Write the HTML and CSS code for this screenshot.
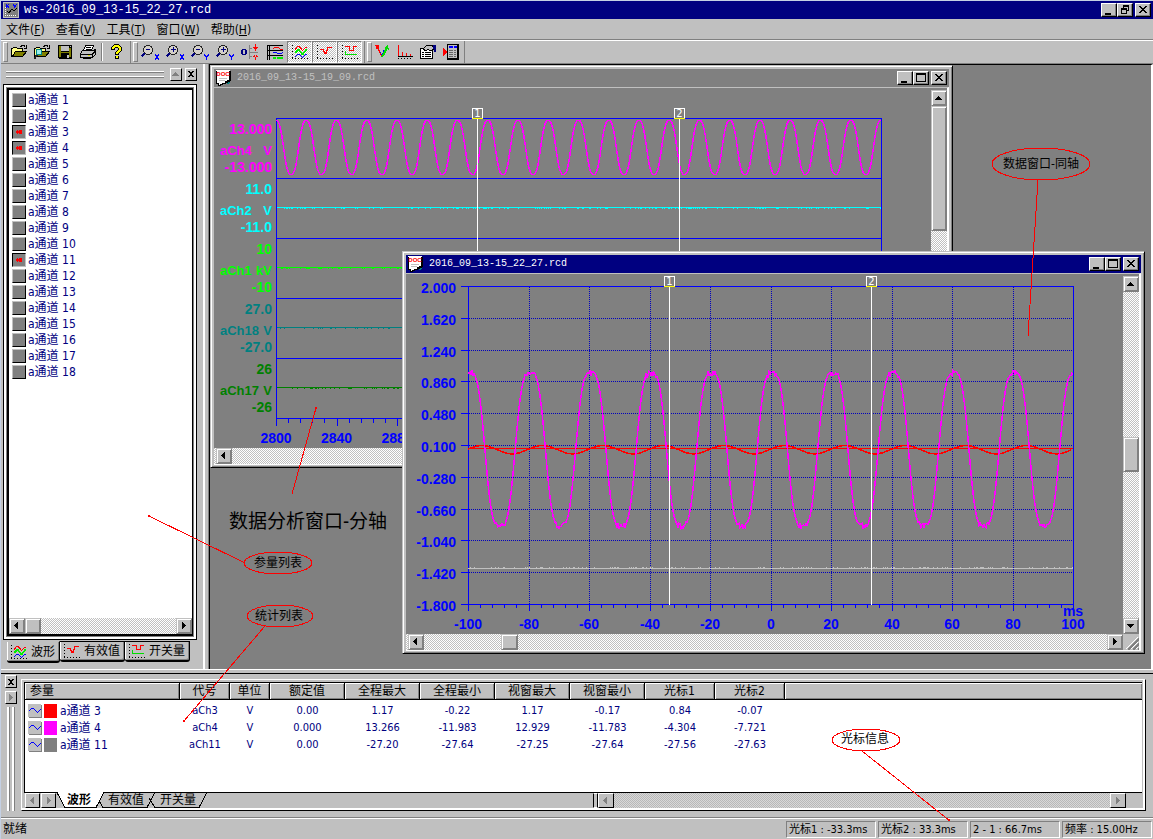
FILE: index.html
```html
<!DOCTYPE html>
<html lang="zh-CN">
<head>
<meta charset="utf-8">
<title>ws-2016_09_13-15_22_27.rcd</title>
<link rel="stylesheet" href="styles.css">
</head>
<body>
<svg class="defs" aria-hidden="true">
  <symbol id="i-left" viewBox="0 0 8 8"><path d="M5 0v7h-1v-1h-1v-1h-1v-1h-1v-1h1v-1h1v-1h1v-1z"/></symbol>
  <symbol id="i-right" viewBox="0 0 8 8"><path d="M2 0v7h1v-1h1v-1h1v-1h1v-1h-1v-1h-1v-1h-1v-1z"/></symbol>
  <symbol id="i-up" viewBox="0 0 8 8"><path d="M0 6h7v-1h-1v-1h-1v-1h-1v-1h-1v1h-1v1h-1v1h-1z"/></symbol>
  <symbol id="i-down" viewBox="0 0 8 8"><path d="M0 2h7v1h-1v1h-1v1h-1v1h-1v-1h-1v-1h-1v-1h-1z"/></symbol>
  <symbol id="i-min" viewBox="0 0 10 10"><path d="M1 8h6v2h-6z"/></symbol>
  <symbol id="i-max" viewBox="0 0 10 10"><path fill-rule="evenodd" d="M0 0h10v9h-10zM1 2v6h8v-6z"/></symbol>
  <symbol id="i-restore" viewBox="0 0 10 10"><path fill-rule="evenodd" d="M3 0h6v6h-2v-1h1v-3h-4v1h-1zM1 3h6v6h-6zM2 5v3h4v-3z"/></symbol>
  <symbol id="i-x" viewBox="0 0 10 10"><path d="M1 1h2v1h1v1h2v-1h1v-1h2v1h-1v1h-1v1h-1v1h1v1h1v1h1v1h-2v-1h-1v-1h-2v1h-1v1h-2v-1h1v-1h1v-1h1v-1h-1v-1h-1v-1h-1z"/></symbol>
  <symbol id="i-xs" viewBox="0 0 8 8"><path d="M1 1h2v1h2v-1h2v1h-1v1h-1v2h1v1h1v1h-2v-1h-2v1h-2v-1h1v-1h1v-2h-1v-1h-1z"/></symbol>
  <symbol id="i-doc" viewBox="0 0 16 16">
    <path fill="#fff" stroke="#000" d="M.5 0v13.500h2v2h2v-1h2v-1h3v-2h2v-1h2v-10.500"/>
    <path fill="#fff" d="M0 0h14v1h-14z"/><path fill="#000" d="M14 1h1v10h-1zM12 11h2v1h-2zM10 12h2v1h-2z"/><path fill="#008080" d="M12 12h2v1h-2zM11 13h2v1h-2z"/>
    <text class="doc-mark" x="7" y="6">DOC</text>
    <path fill="#c0c0c0" d="M3 8h8v1h-8zM3 10h6v1h-6z"/>
  </symbol>
  <symbol id="i-wave" viewBox="0 0 16 16">
    <path stroke="#000" stroke-dasharray="1 2" d="M.5 1v15M0 14.500h16"/>
    <path fill="none" stroke="#f00" d="M3 6l3-4h1l3 4h1l3-3h1"/><path fill="none" stroke="#0e0" stroke-width="1.500" d="M3 9l3-3h1l3 4h1l3-4h1"/><path fill="none" stroke="#00f" d="M3 13l3-3h1l3 3h1l3-3h1"/>
  </symbol>
  <symbol id="i-rms" viewBox="0 0 16 16">
    <path stroke="#000" stroke-dasharray="1 2" d="M.5 1v15M0 14.500h16"/>
    <path fill="none" stroke="#f00" d="M3 5.500h3l2 4h1l2-6h4M8 8v2"/>
  </symbol>
  <symbol id="i-sw" viewBox="0 0 16 16">
    <path stroke="#000" stroke-dasharray="1 2" d="M.5 1v15M0 14.500h16"/>
    <path fill="none" stroke="#f00" d="M3 2.500h4v4h4v-4h4"/><path fill="none" stroke="#0d0" d="M3.500 7v3.500h11"/>
  </symbol>
  <symbol id="i-lens" viewBox="0 0 18 16"><circle cx="7" cy="6" r="4.500" fill="#d4d0c8" stroke="#222"/><path stroke="#000080" stroke-width="2" d="M3.500 9.500l-3 3"/></symbol>
  <symbol id="i-open" viewBox="0 0 16 16"><path fill="#ff8" stroke="#000" d="M.5 12.500v-8h1l1-1h3l1 1h5v3"/><path fill="#808000" stroke="#000" d="M1.500 12.500l3-5h11l-4 5z"/><path fill="none" stroke="#000" d="M9 2.500h1l1-1h2l1.500 2M15.500 1v3h-3"/></symbol>
</svg>

<header class="titlebar">
  <svg class="app-icon" viewBox="0 0 16 16"><path fill="#c0c0c0" d="M0 0h16v16h-16z"/><path fill="#808080" d="M1 1h14v14h-14z"/><path fill="none" stroke="#00f" d="M3 2l3 4M6 2l-3 4M10 2l1.500 2M14 2l-3 4"/><path fill="none" stroke="#fff" stroke-dasharray="1 1" d="M2.500 5v9M2 13.500h12"/><path fill="none" stroke="#000" d="M4 9l2 2l3-4l2 2l3-3"/></svg>
  <h1>ws-2016_09_13-15_22_27.rcd</h1>
  <div class="win-buttons">
    <button aria-label="最小化"><svg><use href="#i-min"/></svg></button><button aria-label="还原"><svg><use href="#i-restore"/></svg></button><button class="close" aria-label="关闭"><svg><use href="#i-x"/></svg></button>
  </div>
</header>

<nav class="menubar">
  <button>文件(<u>F</u>)</button><button>查看(<u>V</u>)</button><button>工具(<u>T</u>)</button><button>窗口(<u>W</u>)</button><button>帮助(<u>H</u>)</button>
</nav>

<div class="toolbars">
  <div class="toolbar">
    <button aria-label="打开"><svg viewBox="0 0 16 16"><use href="#i-open"/></svg></button>
    <button aria-label="查找文件"><svg viewBox="0 0 16 16"><use href="#i-open"/><circle cx="5" cy="8" r="3" fill="#9ee" stroke="#088"/><path stroke="#222" stroke-width="2" d="M3 11l-3 4"/></svg></button>
    <button aria-label="保存"><svg viewBox="0 0 16 16"><path fill="#000" d="M1 1h14v14h-13l-1-1z"/><path fill="#808000" d="M2 2h2v11h-2zM12 4h2v9h-2zM4 8h8v1h-8z"/><path fill="#c0c0c0" d="M4 2h8v5h-8zM10 11h2v3h-2zM13 2h1v1h-1z"/></svg></button>
    <button aria-label="打印"><svg viewBox="0 0 16 16"><path fill="#fff" stroke="#000" d="M3.500 6.500l2-5h8l-2 5"/><path stroke="#000" d="M6 3.500h5M6 5.500h5"/><path fill="#c0c0c0" stroke="#000" d="M.5 9.500l2-3h11l2-1v5l-3 3h-12z"/><path fill="none" stroke="#000" d="M1 10.500h11.500v3M12.500 10l3-3M3 14.500h8"/><path stroke="#dd0" d="M8 11.500h2"/></svg></button>
    <i class="sep"></i>
    <button aria-label="帮助"><svg viewBox="0 0 16 16"><path fill="none" stroke="#000" stroke-width="4" d="M4 6v-2l2-2h3l2 2v2l-3 3v2M8 12v3"/><path fill="none" stroke="#ff0" stroke-width="2" d="M4 5v-1l2-2h3l2 2v2l-3 3v1M8 12v2"/></svg></button>
  </div>
  <div class="toolbar wide">
    <button aria-label="X轴缩小"><svg viewBox="0 0 18 16"><use href="#i-lens"/><path fill="#000080" d="M5 5h4v1h-4z"/><path stroke="#00f" d="M14 10l4 6M18 10l-4 6"/></svg></button>
    <button aria-label="X轴放大"><svg viewBox="0 0 18 16"><use href="#i-lens"/><path fill="#000080" d="M5 5h5v1h-5zM7 3h1v5h-1z"/><path stroke="#00f" d="M14 10l4 6M18 10l-4 6"/></svg></button>
    <button aria-label="Y轴缩小"><svg viewBox="0 0 18 16"><use href="#i-lens"/><path fill="#000080" d="M5 5h4v1h-4z"/><path fill="none" stroke="#00f" d="M13.500 10v1l2 2v3M17.500 10v1l-2 2"/></svg></button>
    <button aria-label="Y轴放大"><svg viewBox="0 0 18 16"><use href="#i-lens"/><path fill="#000080" d="M5 5h5v1h-5zM7 3h1v5h-1z"/><path fill="none" stroke="#00f" d="M13.500 10v1l2 2v3M17.500 10v1l-2 2"/></svg></button>
    <button aria-label="零点"><svg viewBox="0 0 18 16"><path fill="#000080" fill-rule="evenodd" d="M1 5h4v1h1v4h-1v1h-4v-1h-1v-4h1zM2 6v4h2v-4z"/><path fill="#808080" d="M8 1h1v14h-1zM9 4h2v1h-2zM9 8h8v1h-8zM9 12h2v1h-2z"/><path fill="#f00" d="M14 0h1v7h-1zM14 10h1v6h-1zM12 3h5l-2.500 3zM12 13h5l-2.500-3z"/></svg></button>
    <button aria-label="坐标"><svg viewBox="0 0 18 16"><path fill="#000" d="M1 1h1v15h-1zM3 1h1v15h-1zM1 1h16v1h-16zM1 6h16v1h-16zM1 11h16v1h-16z"/><path fill="none" stroke="#f00" d="M7 5l2-2h3l2 2h3"/><path fill="none" stroke="#00f" d="M7 8.500h3l2 1h3l2-1"/><path fill="#0e0" d="M7 13h3v2h-3zM11 13h6v2h-6z"/></svg></button>
    <button class="pressed" aria-label="波形"><svg viewBox="0 0 16 16"><use href="#i-wave"/></svg></button>
    <button class="pressed" aria-label="有效值"><svg viewBox="0 0 16 16"><use href="#i-rms"/></svg></button>
    <button class="pressed" aria-label="开关量"><svg viewBox="0 0 16 16"><use href="#i-sw"/></svg></button>
  </div>
  <div class="toolbar last">
    <button aria-label="矢量"><svg viewBox="0 0 16 16"><path fill="none" stroke="#00f" d="M8 12l-3-6M8 12l2-6"/><path stroke="#f00" d="M8 13l-5-11"/><path fill="#f00" d="M1 1h4v2l-2 3z"/><path stroke="#0d0" stroke-width="2" d="M8 13l5-9"/><path fill="#0d0" d="M14 1l1 5l-5-2z"/></svg></button>
    <button aria-label="频谱"><svg viewBox="0 0 16 16"><path fill="#f00" d="M1 1h1v11h-1zM5 8h1v4h-1zM9 9h1v3h-1zM13 10h1v2h-1z"/><path fill="#000" d="M1 12h15v1h-15zM1 14h1v1h-1zM4 14h1v1h-1zM7 14h1v1h-1zM10 14h1v1h-1zM13 14h1v1h-1z"/></svg></button>
    <button aria-label="属性"><svg viewBox="0 0 16 16"><path fill="#fff" stroke="#000" d="M.5 4.500h12v10h-12z"/><path fill="#000" d="M2 8h2v1h-2zM5 8h6v1h-6zM2 10h2v1h-2zM5 10h6v1h-6zM2 12h2v1h-2zM5 12h6v1h-6z"/><path fill="#c0c0c0" stroke="#000" d="M3 5l4-4h4l3 2v2l-4 2l-2-2l-2 2z"/><path fill="#000080" d="M13 1h3v7h-2v-3h-1z"/></svg></button>
    <button aria-label="导出"><svg viewBox="0 0 16 16"><path fill="#000" d="M4 0h12v16h-12z"/><path fill="#c0c0c0" d="M5 1h9v13h-9z"/><path fill="#f00" d="M0 4l4 4l-4 4z"/><path fill="#00f" d="M6 2h4v2h-4zM11 2h3v2h-3z"/><path fill="#666" d="M6 6h4v1h-4zM11 6h2v1h-2zM6 8h4v1h-4zM11 8h2v1h-2zM6 10h4v1h-4zM11 10h2v1h-2zM6 12h4v1h-4zM11 12h2v1h-2z"/></svg></button>
  </div>
</div>

<main class="workspace">
  <aside class="dock">
    <div class="dock-head">
      <div class="grip"></div>
      <button aria-label="展开" disabled><svg><use href="#i-up"/></svg></button><button aria-label="关闭"><svg><use href="#i-xs"/></svg></button>
    </div>
    <div class="list-frame">
      <ul class="channels" id="channels"></ul>
      <div class="hscroll">
        <button aria-label="左"><svg><use href="#i-left"/></svg></button><span class="thumb"></span><button class="end" aria-label="右"><svg><use href="#i-right"/></svg></button>
      </div>
    </div>
    <div class="dock-tabs">
      <button class="active"><svg><use href="#i-wave"/></svg>波形</button><button><svg><use href="#i-rms"/></svg>有效值</button><button><svg><use href="#i-sw"/></svg>开关量</button>
    </div>
  </aside>

  <section class="desktop">
    <article class="window back">
      <header><svg><use href="#i-doc"/></svg><h2>2016_09_13-15_19_09.rcd</h2>
        <div class="win-buttons"><button aria-label="最小化"><svg><use href="#i-min"/></svg></button><button aria-label="最大化"><svg><use href="#i-max"/></svg></button><button class="close" aria-label="关闭"><svg><use href="#i-x"/></svg></button></div>
      </header>
      <div class="client">
        <svg class="chart" id="split" viewBox="214 88 717 360"></svg>
        <div class="vscroll"><button aria-label="上"><svg><use href="#i-up"/></svg></button><span class="thumb long"></span><button class="end" aria-label="下"><svg><use href="#i-down"/></svg></button></div>
        <div class="hscroll"><button aria-label="左"><svg><use href="#i-left"/></svg></button><button class="end" aria-label="右"><svg><use href="#i-right"/></svg></button></div>
        <div class="sizer"></div>
      </div>
    </article>
    <article class="window front">
      <header><svg><use href="#i-doc"/></svg><h2>2016_09_13-15_22_27.rcd</h2>
        <div class="win-buttons"><button aria-label="最小化"><svg><use href="#i-min"/></svg></button><button aria-label="最大化"><svg><use href="#i-max"/></svg></button><button class="close" aria-label="关闭"><svg><use href="#i-x"/></svg></button></div>
      </header>
      <div class="client">
        <svg class="chart" id="shared" viewBox="406 274 717 360"></svg>
        <div class="vscroll"><button aria-label="上"><svg><use href="#i-up"/></svg></button><span class="thumb mid"></span><button class="end" aria-label="下"><svg><use href="#i-down"/></svg></button></div>
        <div class="hscroll"><button aria-label="左"><svg><use href="#i-left"/></svg></button><span class="thumb far"></span><button class="end" aria-label="右"><svg><use href="#i-right"/></svg></button></div>
        <div class="sizer"><svg viewBox="0 0 16 16"><path stroke="#fff" d="M3 15l12-12M8 15l7-7M13 15l2-2"/><path stroke="#808080" stroke-width="2" d="M5 16l11-11M10 16l6-6M15 16l1-1"/></svg></div>
      </div>
    </article>
  </section>
</main>

<section class="stats">
  <div class="stats-side">
    <button aria-label="关闭"><svg><use href="#i-xs"/></svg></button>
    <button aria-label="展开" disabled><svg><use href="#i-right"/></svg></button>
    <div class="vgrip"></div>
  </div>
  <div class="stats-frame">
    <div class="table-area">
      <table>
        <colgroup><col class="c155"><col class="c50"><col class="c40"><col class="c75"><col class="c75"><col class="c75"><col class="c75"><col class="c75"><col class="c70"><col class="c70"><col></colgroup>
        <thead><tr><th>参量</th><th>代号</th><th>单位</th><th>额定值</th><th>全程最大</th><th>全程最小</th><th>视窗最大</th><th>视窗最小</th><th>光标1</th><th>光标2</th><th></th></tr></thead>
        <tbody>
          <tr><td><div class="name"><svg viewBox="0 0 13 13"><path d="M1 7l3-3h1l4 4h1l3-3"/></svg><i class="red"></i>a通道 3</div></td><td>aCh3</td><td>V</td><td>0.00</td><td>1.17</td><td>-0.22</td><td>1.17</td><td>-0.17</td><td>0.84</td><td>-0.07</td><td></td></tr>
          <tr><td><div class="name"><svg viewBox="0 0 13 13"><path d="M1 7l3-3h1l4 4h1l3-3"/></svg><i class="magenta"></i>a通道 4</div></td><td>aCh4</td><td>V</td><td>0.000</td><td>13.266</td><td>-11.983</td><td>12.929</td><td>-11.783</td><td>-4.304</td><td>-7.721</td><td></td></tr>
          <tr><td><div class="name"><svg viewBox="0 0 13 13"><path d="M1 7l3-3h1l4 4h1l3-3"/></svg><i class="gray"></i>a通道 11</div></td><td>aCh11</td><td>V</td><td>0.00</td><td>-27.20</td><td>-27.64</td><td>-27.25</td><td>-27.64</td><td>-27.56</td><td>-27.63</td><td></td></tr>
        </tbody>
      </table>
    </div>
    <div class="sheet-bar">
      <button class="nav" aria-label="上一页" disabled><svg><use href="#i-left"/></svg></button><button class="nav" aria-label="下一页" disabled><svg><use href="#i-right"/></svg></button>
      <div class="sheets">
        <svg viewBox="0 0 152 16"><path fill="#fff" d="M0 0h47l-8 15h-31z"/><path fill="#000" d="M47 0h105v1h-105z"/><path fill="none" stroke="#000" d="M0 .5l8 15h31l8-15M42 9l4 6.500h44l8-15M92 6l6 9.500h44l8-15"/></svg>
        <button class="active">波形</button><button>有效值</button><button class="wide-tab">开关量</button>
      </div>
      <div class="hscroll">
        <span class="splitter"></span><button aria-label="左" disabled><svg><use href="#i-left"/></svg></button><button class="end" aria-label="右" disabled><svg><use href="#i-right"/></svg></button><span class="pad"></span>
      </div>
    </div>
  </div>
</section>

<footer class="statusbar">
  <p>就绪</p><output>光标1 : -33.3ms</output><output>光标2 : 33.3ms</output><output>2 - 1 : 66.7ms</output><output>频率 : 15.00Hz</output>
</footer>

<svg class="notes" viewBox="0 0 1153 839">
  <ellipse cx="1041" cy="164" rx="49" ry="16"/><path d="M1038 180l-10 156"/><text x="1041" y="168">数据窗口-同轴</text>
  <ellipse cx="278" cy="563" rx="34" ry="11"/><path d="M245 563l-96-47"/><text x="278" y="567">参量列表</text>
  <ellipse cx="280" cy="616" rx="33" ry="11"/><path d="M265 626l-81 95"/><text x="279" y="620">统计列表</text>
  <ellipse cx="866" cy="740" rx="34" ry="11"/><path d="M862 751l88 70"/><text x="865" y="743">光标信息</text>
  <path d="M316 408l-24 86"/><text class="big" x="308" y="528">数据分析窗口-分轴</text>
  <g class="dots"><circle cx="316" cy="408" r="1"/><circle cx="149" cy="516" r="1"/><circle cx="184" cy="721" r="1"/><circle cx="949" cy="820" r="1"/></g>
</svg>
<script src="script.js"></script>
</body>
</html>
```
FILE: styles.css
```css
* { box-sizing: border-box; }
:root {
  --face: #c0c0c0;
  --shade: #808080;
  --navy: #000080;
  --ui: "DejaVu Sans Condensed", "Noto Sans CJK SC", sans-serif;
  --dither: repeating-conic-gradient(#fff 0 25%, #c0c0c0 0 50%) 0 0 / 2px 2px;
}
body {
  position: relative;
  margin: 0;
  min-height: 100vh;
  display: flex;
  flex-direction: column;
  border: solid #c4d0e4;
  border-width: 1px 0 0 1px;
  background: var(--face);
  font: 12px/16px var(--ui);
  color: #000;
}
.defs { position: absolute; width: 0; height: 0; }
svg { shape-rendering: crispEdges; display: block; flex: none; }
h1, h2, p, ul { margin: 0; padding: 0; }
button {
  font: inherit; color: inherit; padding: 0; margin: 0; border: 0;
  background: var(--face);
  display: flex; align-items: center; justify-content: center;
}
button:disabled { color: var(--shade); }
button svg { fill: currentColor; }

/* title bars */
.titlebar { display: flex; align-items: center; height: 18px; padding: 0 2px; background: var(--navy); color: #fff; }
.app-icon { width: 16px; height: 16px; }
.titlebar h1 { flex: 1; margin-left: 5px; font: 12px/16px "Liberation Mono", monospace; }
.win-buttons { display: flex; }
.win-buttons button {
  width: 16px; height: 14px; color: #000;
  border: 1px solid; border-color: #fff #000 #000 #fff;
  box-shadow: inset -1px -1px var(--shade);
}
.win-buttons svg { width: 10px; height: 10px; }
.win-buttons .close { margin-left: 2px; }
.doc-mark { font: bold 6px "Liberation Sans", sans-serif; fill: #f00; text-anchor: middle; }

/* menu and tools */
.menubar { display: flex; gap: 11px; height: 21px; padding: 0 5px; align-items: center; }
.menubar button { height: 18px; }
.toolbars { display: flex; height: 24px; border-top: 1px solid #fff; box-shadow: 0 -1px var(--shade); border-bottom: 1px solid var(--shade); }
.toolbar { display: flex; align-items: stretch; padding-left: 6px; padding-right: 2px; border-right: 1px solid var(--shade); position: relative; }
.toolbar::before { content: ""; position: absolute; left: 2px; top: 1px; bottom: 1px; width: 3px; border: 1px solid; border-color: #fff var(--shade) var(--shade) #fff; }
.toolbar button { width: 23px; }
.toolbar button svg { width: 16px; height: 16px; fill: none; }
.toolbar.wide button { width: 25px; }
.toolbar.wide button svg { width: 18px; }
.toolbar.wide .pressed svg { width: 16px; }
.toolbar.last { padding-left: 5px; }
.pressed { background: var(--dither); border: 1px solid; border-color: var(--shade) #fff #fff var(--shade); }
.sep { width: 2px; margin: 2px; border-left: 1px solid var(--shade); border-right: 1px solid #fff; }

/* workspace */
.workspace { flex: 1; display: flex; min-height: 0; }
.dock { width: 208px; flex: none; display: flex; flex-direction: column; padding: 0 11px 6px 4px; border-right: 1px solid var(--shade); box-shadow: inset -3px 0 var(--face), inset -5px 0 #fff; }
.dock-head { display: flex; align-items: center; gap: 3px; height: 20px; padding-left: 1px; }
.grip { flex: 1; height: 6px; margin-right: 3px; border: solid #fff; border-width: 1px 0; box-shadow: 0 1px var(--shade), inset 0 1px var(--shade); }
.dock-head button, .stats-side button { width: 12px; height: 13px; border: 1px solid; border-color: #fff #000 #000 #fff; }
.dock-head svg, .stats-side button svg { width: 8px; height: 8px; }
.list-frame {
  flex: 1; display: flex; flex-direction: column; background: #fff;
  border: 2px solid #000; border-right-width: 1px;
  box-shadow: 0 0 0 1px var(--shade), 0 0 0 3px #fff, 0 0 0 4px #000; margin: 4px 4px 5px 2px;
}
.channels { flex: 1; list-style: none; padding: 2px 3px; color: var(--navy); }
.channels li { display: flex; align-items: center; gap: 2px; height: 16px; white-space: nowrap; }
.channels button { width: 14px; height: 14px; background: var(--shade); border: 1px solid; border-color: var(--face) #000 #000 var(--face); color: #f00; }
.channels button.on { border-color: #000 var(--face) var(--face) #000; }
.channels button svg { width: 8px; height: 6px; }
.hscroll, .vscroll { display: flex; background: var(--dither); }
.vscroll { flex-direction: column; }
.hscroll { height: 16px; }
.hscroll button, .vscroll button, .thumb {
  width: 16px; height: 16px; background: var(--face); flex: none;
  border: 1px solid; border-color: var(--face) var(--shade) var(--shade) var(--face);
  box-shadow: inset 1px 1px #fff, inset -1px -1px var(--shade);
}
.hscroll svg, .vscroll svg { width: 8px; height: 8px; }
.hscroll .end { margin-left: auto; }
.vscroll .end { margin-top: auto; }
.thumb.long { height: 125px; }
.thumb.mid { height: 35px; margin-top: 145px; }
.thumb.far { width: 17px; margin-left: 77px; }
.dock-tabs { display: flex; align-items: flex-start; margin-left: 2px; height: 22px; }
.dock-tabs button { height: 21px; width: 65px; gap: 4px; border: solid #000; border-width: 1px 1px 2px 0; border-radius: 0 0 3px 3px; box-shadow: inset 1px 0 #fff, inset -1px -1px var(--shade); }
.dock-tabs .active { width: 53px; height: 22px; border-top-color: var(--face); }
.dock-tabs svg { width: 16px; height: 16px; fill: none; }

.desktop { flex: 1; position: relative; overflow: hidden; background: var(--shade); border: solid; border-width: 1px 2px 0 1px; border-color: #000 #fff #000 #000; }
.window { position: absolute; width: 743px; padding: 3px 3px 2px; background: var(--face); border: 1px solid; border-color: var(--face) #000 #000 var(--face); box-shadow: inset 1px 1px #fff, inset -1px -1px var(--shade); }
.back { left: 0; top: 0; }
.front { left: 192px; top: 186px; }
.window header { display: flex; align-items: center; height: 18px; padding: 0 2px; background: var(--shade); color: var(--face); }
.front header { background: var(--navy); color: #fff; }
.window header > svg { width: 16px; height: 16px; }
.window h2 { flex: 1; margin-left: 5px; font: 10px/16px "Liberation Mono", monospace; }
.client { display: grid; grid-template-columns: 1fr 16px; border: solid; border-width: 1px 2px 1px 0; border-color: var(--face) #fff #fff; background: var(--shade); }
.chart { width: 100%; }
.client .vscroll { margin-top: 2px; }
.client .hscroll { padding-left: 2px; }
.sizer { background: var(--face); }
.sizer svg { width: 16px; height: 16px; }

.chart text { font: bold 14px "Liberation Sans", sans-serif; }
.chart .name-label { font-size: 13px; }
.chart .unit-label { font-size: 13px; text-anchor: end; }
.chart .mark { font: 10px "DejaVu Sans", sans-serif; fill: #fff; text-anchor: middle; }
.end-anchor { text-anchor: end; }
.mid-anchor { text-anchor: middle; }

/* statistics */
.stats { display: flex; flex: none; height: 149px; border-top: 1px solid #fff; padding: 9px 7px 7px 4px; background: linear-gradient(#000, #000) 0 3px / 100% 1px no-repeat; }
.stats-side { width: 16px; flex: none; display: flex; flex-direction: column; gap: 3px; margin-top: -4px; }
.vgrip { flex: 1; width: 7px; margin-left: 2px; border: solid #fff; border-width: 0 2px; box-shadow: 1px 0 var(--shade), inset 1px 0 var(--shade); }
.stats-frame { flex: 1; display: flex; flex-direction: column; border: 1px solid #fff; border-color: #fff #000 #000 #fff; box-shadow: inset -2px -2px #fff, inset 2px 2px var(--face); padding: 2px 3px 2px 2px; min-width: 0; }
.table-area { flex: 1; background: #fff; border: solid #000; border-width: 1px 0 0 1px; }
table { width: 100%; border-collapse: separate; border-spacing: 0; table-layout: fixed; color: var(--navy); }
.c155 { width: 155px; } .c50 { width: 50px; } .c40 { width: 40px; } .c75 { width: 75px; } .c70 { width: 70px; }
th { height: 17px; padding: 0; font-weight: normal; line-height: 15px; color: #000; background: var(--face); border-right: 1px solid #000; border-bottom: 1px solid #000; box-shadow: inset 1px 1px #fff, inset -1px -1px var(--shade); }
th:first-child { text-align: left; padding-left: 5px; }
th:last-child { border-right: 0; }
td { height: 17px; padding: 0; text-align: center; font-size: 11px; line-height: 16px; }
thead::after { content: ""; display: block; height: 2px; }
.name { display: flex; align-items: center; gap: 3px; padding-left: 3px; font-size: 12px; }
.name svg { width: 13px; height: 13px; background: var(--face); box-shadow: 1px 1px var(--shade); }
.name path { fill: none; stroke: #00f; }
.name i { width: 13px; height: 14px; }
.red { background: #f00; } .magenta { background: #f0f; } .gray { background: #808080; }
.sheet-bar { display: flex; height: 16px; border-top: 1px solid #000; }
.sheet-bar .nav { width: 15px; border: 1px solid; border-color: #fff #000 #000 #fff; margin-left: 1px; }
.sheet-bar svg { width: 8px; height: 8px; }
.sheets { position: relative; display: flex; width: 537px; margin-top: -1px; }
.sheets > svg { position: absolute; left: 1px; top: 0; width: 152px; height: 16px; }
.sheets button { position: relative; background: none; height: 15px; width: 48px; line-height: 14px; }
.sheets .active { font-weight: bold; width: 46px; }
.sheets .wide-tab { width: 56px; }
.sheet-bar .hscroll { flex: 1; height: 15px; background: repeating-conic-gradient(#d8d8d8 0 25%, #b8b8b8 0 50%) 0 0 / 2px 2px; }
.sheet-bar .hscroll button { height: 15px; border-color: #fff #000 #000 #fff; box-shadow: none; }
.splitter { width: 5px; border: 1px solid; border-color: #fff #000 #fff #000; background: var(--face); }
.pad { width: 16px; background: var(--face); }

.statusbar { display: flex; flex: none; gap: 2px; height: 21px; padding: 2px 1px 1px 2px; border-top: 1px solid #fff; box-shadow: 0 -1px var(--shade); }
.statusbar p { flex: 1; }
.statusbar output { width: 90px; padding-left: 2px; font-size: 11px; line-height: 15px; white-space: nowrap; border: 1px solid; border-color: var(--shade) #fff #fff var(--shade); }

/* callouts drawn across the panels */
.notes { position: absolute; left: -1px; top: -1px; width: 1153px; height: 839px; pointer-events: none; fill: none; stroke: #f00; }
.notes text { fill: #000; stroke: none; text-anchor: middle; font-size: 12px; }
.notes .big { font-size: 19px; }
.dots { fill: #f00; }
```
FILE: script.js
```js
const NS = 'http://www.w3.org/2000/svg';
const BLUE = '#0000ff';
const GRID = '#0000c0';

function add(parent, tag, attrs, text) {
  const el = document.createElementNS(NS, tag);
  for (const key in attrs) el.setAttribute(key, attrs[key]);
  if (text !== undefined) el.textContent = text;
  parent.appendChild(el);
  return el;
}
const box = (svg, x, y, width, height, fill) => add(svg, 'rect', { x, y, width, height, fill });
const shape = (svg, d, fill) => add(svg, 'path', { d, fill });
const label = (svg, x, y, text, fill, cls) => add(svg, 'text', { x, y, fill, class: cls }, text);

let seed = 7;
function random() {
  seed = (seed * 1103515245 + 12345) % 2147483648;
  return seed / 2147483648;
}

function plot(svg, from, to, step, fn, stroke, width) {
  let d = '';
  for (let x = from; x <= to; x += step) d += (d ? 'L' : 'M') + x + ' ' + fn(x).toFixed(1);
  add(svg, 'path', { d, stroke, fill: 'none', 'stroke-width': width || 1 });
}

function flat(svg, from, to, y, color, dir) {
  box(svg, from, y, to - from, 1, color);
  let d = '';
  for (let x = from; x < to; x++) if (random() < 0.22) d += `M${x} ${y + dir}h1v1h-1z`;
  shape(svg, d, color);
}

function dotsAcross(svg, from, to, y) {
  let d = '';
  for (let x = from; x < to; x += 2) d += `M${x} ${y}h1v1h-1z`;
  shape(svg, d, GRID);
}

function dotsDown(svg, x, from, to) {
  let d = '';
  for (let y = from; y < to; y += 2) d += `M${x} ${y}h1v1h-1z`;
  shape(svg, d, GRID);
}

function cursor(svg, x, top, bottom, name) {
  box(svg, x, top, 1, bottom - top, '#ffffff');
  add(svg, 'rect', { x: x - 4.5, y: top - 9.5, width: 10, height: 10, stroke: '#ffffff', fill: 'none' });
  box(svg, x - 5, top, 11, 1, '#ffff00');
  label(svg, x + 0.5, top - 1, name, '#ffffff', 'mark');
}

function frame(svg, x, y, width, height) {
  box(svg, x, y, width, 1, BLUE);
  box(svg, x, y + height, width + 1, 1, BLUE);
  box(svg, x, y, 1, height, BLUE);
  box(svg, x + width, y, 1, height, BLUE);
}

function ticks(svg, left, y, major, minor) {
  for (let i = 0; i <= 50; i++) {
    box(svg, Math.round(left + i * 12.1), y, 1, i % 5 ? minor : major, BLUE);
  }
}

function drawSplit() {
  const svg = document.getElementById('split');
  const rows = [
    ['13.000', 'aCh4', 'V', '-13.000', '#ff00ff'],
    ['11.0', 'aCh2', 'V', '-11.0', '#00ffff'],
    ['10', 'aCh1', 'kV', '-10', '#00ff00'],
    ['27.0', 'aCh18', 'V', '-27.0', '#008080'],
    ['26', 'aCh17', 'V', '-26', '#008000']
  ];
  rows.forEach(([high, name, unit, low, color], i) => {
    const y = 118 + i * 60;
    label(svg, 272, y + 16, high, color, 'end-anchor');
    label(svg, 220, y + 37, name, color, 'name-label');
    label(svg, 272, y + 37, unit, color, 'unit-label');
    label(svg, 272, y + 54, low, color, 'end-anchor');
    box(svg, 276, y, 606, 1, BLUE);
    if (i) flat(svg, 276, 881, y + 29, color, 1);
  });
  frame(svg, 276, 118, 605, 300);
  ticks(svg, 276, 418, 8, 5);
  for (let i = 0; i <= 10; i++) label(svg, 276 + i * 60.5, 443, 2800 + i * 40, BLUE, 'mid-anchor');
  plot(svg, 276, 881, 1, x => {
    const t = (x - 276) / 30.25 * 2 * Math.PI;
    return 147.5 - 29 * (Math.cos(t) - 0.06 * Math.cos(3 * t));
  }, '#ff00ff', 1.5);
  cursor(svg, 477, 118, 418, '1');
  cursor(svg, 679, 118, 418, '2');
}

function drawShared() {
  const svg = document.getElementById('shared');
  for (let i = 0; i <= 10; i++) {
    const y = Math.round(286 + i * 31.8);
    const x = Math.round(468 + i * 60.5);
    box(svg, 461, y, 7, 1, BLUE);
    label(svg, 456, y + 7, (2 - i * 0.38).toFixed(3), BLUE, 'end-anchor');
    label(svg, x, 629, -100 + i * 20, BLUE, 'mid-anchor');
    if (i > 0 && i < 10) {
      dotsAcross(svg, 469, 1073, y);
      dotsDown(svg, x, 287, 604);
    }
  }
  frame(svg, 468, 286, 605, 318);
  ticks(svg, 468, 604, 7, 4);
  label(svg, 1073, 616, 'ms', BLUE, 'mid-anchor');
  flat(svg, 468, 1073, 568, '#c0c0c0', -1);
  box(svg, 468, 448, 605, 1, '#ff0000');
  plot(svg, 468, 1073, 3, x => 449.7 - 4.2 * Math.cos((x - 482) / 60.5 * 2 * Math.PI), '#ff0000', 1.5);
  plot(svg, 468, 1073, 1, x => {
    const c = Math.cos((x - 469.8) / 60.5 * 2 * Math.PI);
    const t = Math.acos(c);
    const noise = Math.abs(c) > 0.85 ? (random() - 0.5) * 5 : 0;
    return 449.5 - 85 * (c - 0.1 * Math.cos(3 * t)) + noise;
  }, '#ff00ff', 1.5);
  cursor(svg, 669, 286, 605, '1');
  cursor(svg, 871, 286, 605, '2');
}

function fillChannels() {
  const list = document.getElementById('channels');
  const active = [3, 4, 11];
  for (let i = 1; i <= 18; i++) {
    const item = document.createElement('li');
    const on = active.includes(i);
    item.innerHTML = `<button class="${on ? 'on' : ''}" aria-label="a通道 ${i}">` +
      (on ? '<svg viewBox="0 0 8 6"><path d="M0 3l3-3v2h1v-1h3v4h-3v-1h-1v2z"/></svg>' : '') +
      `</button>a通道 ${i}`;
    list.appendChild(item);
  }
}

fillChannels();
drawSplit();
drawShared();
```
